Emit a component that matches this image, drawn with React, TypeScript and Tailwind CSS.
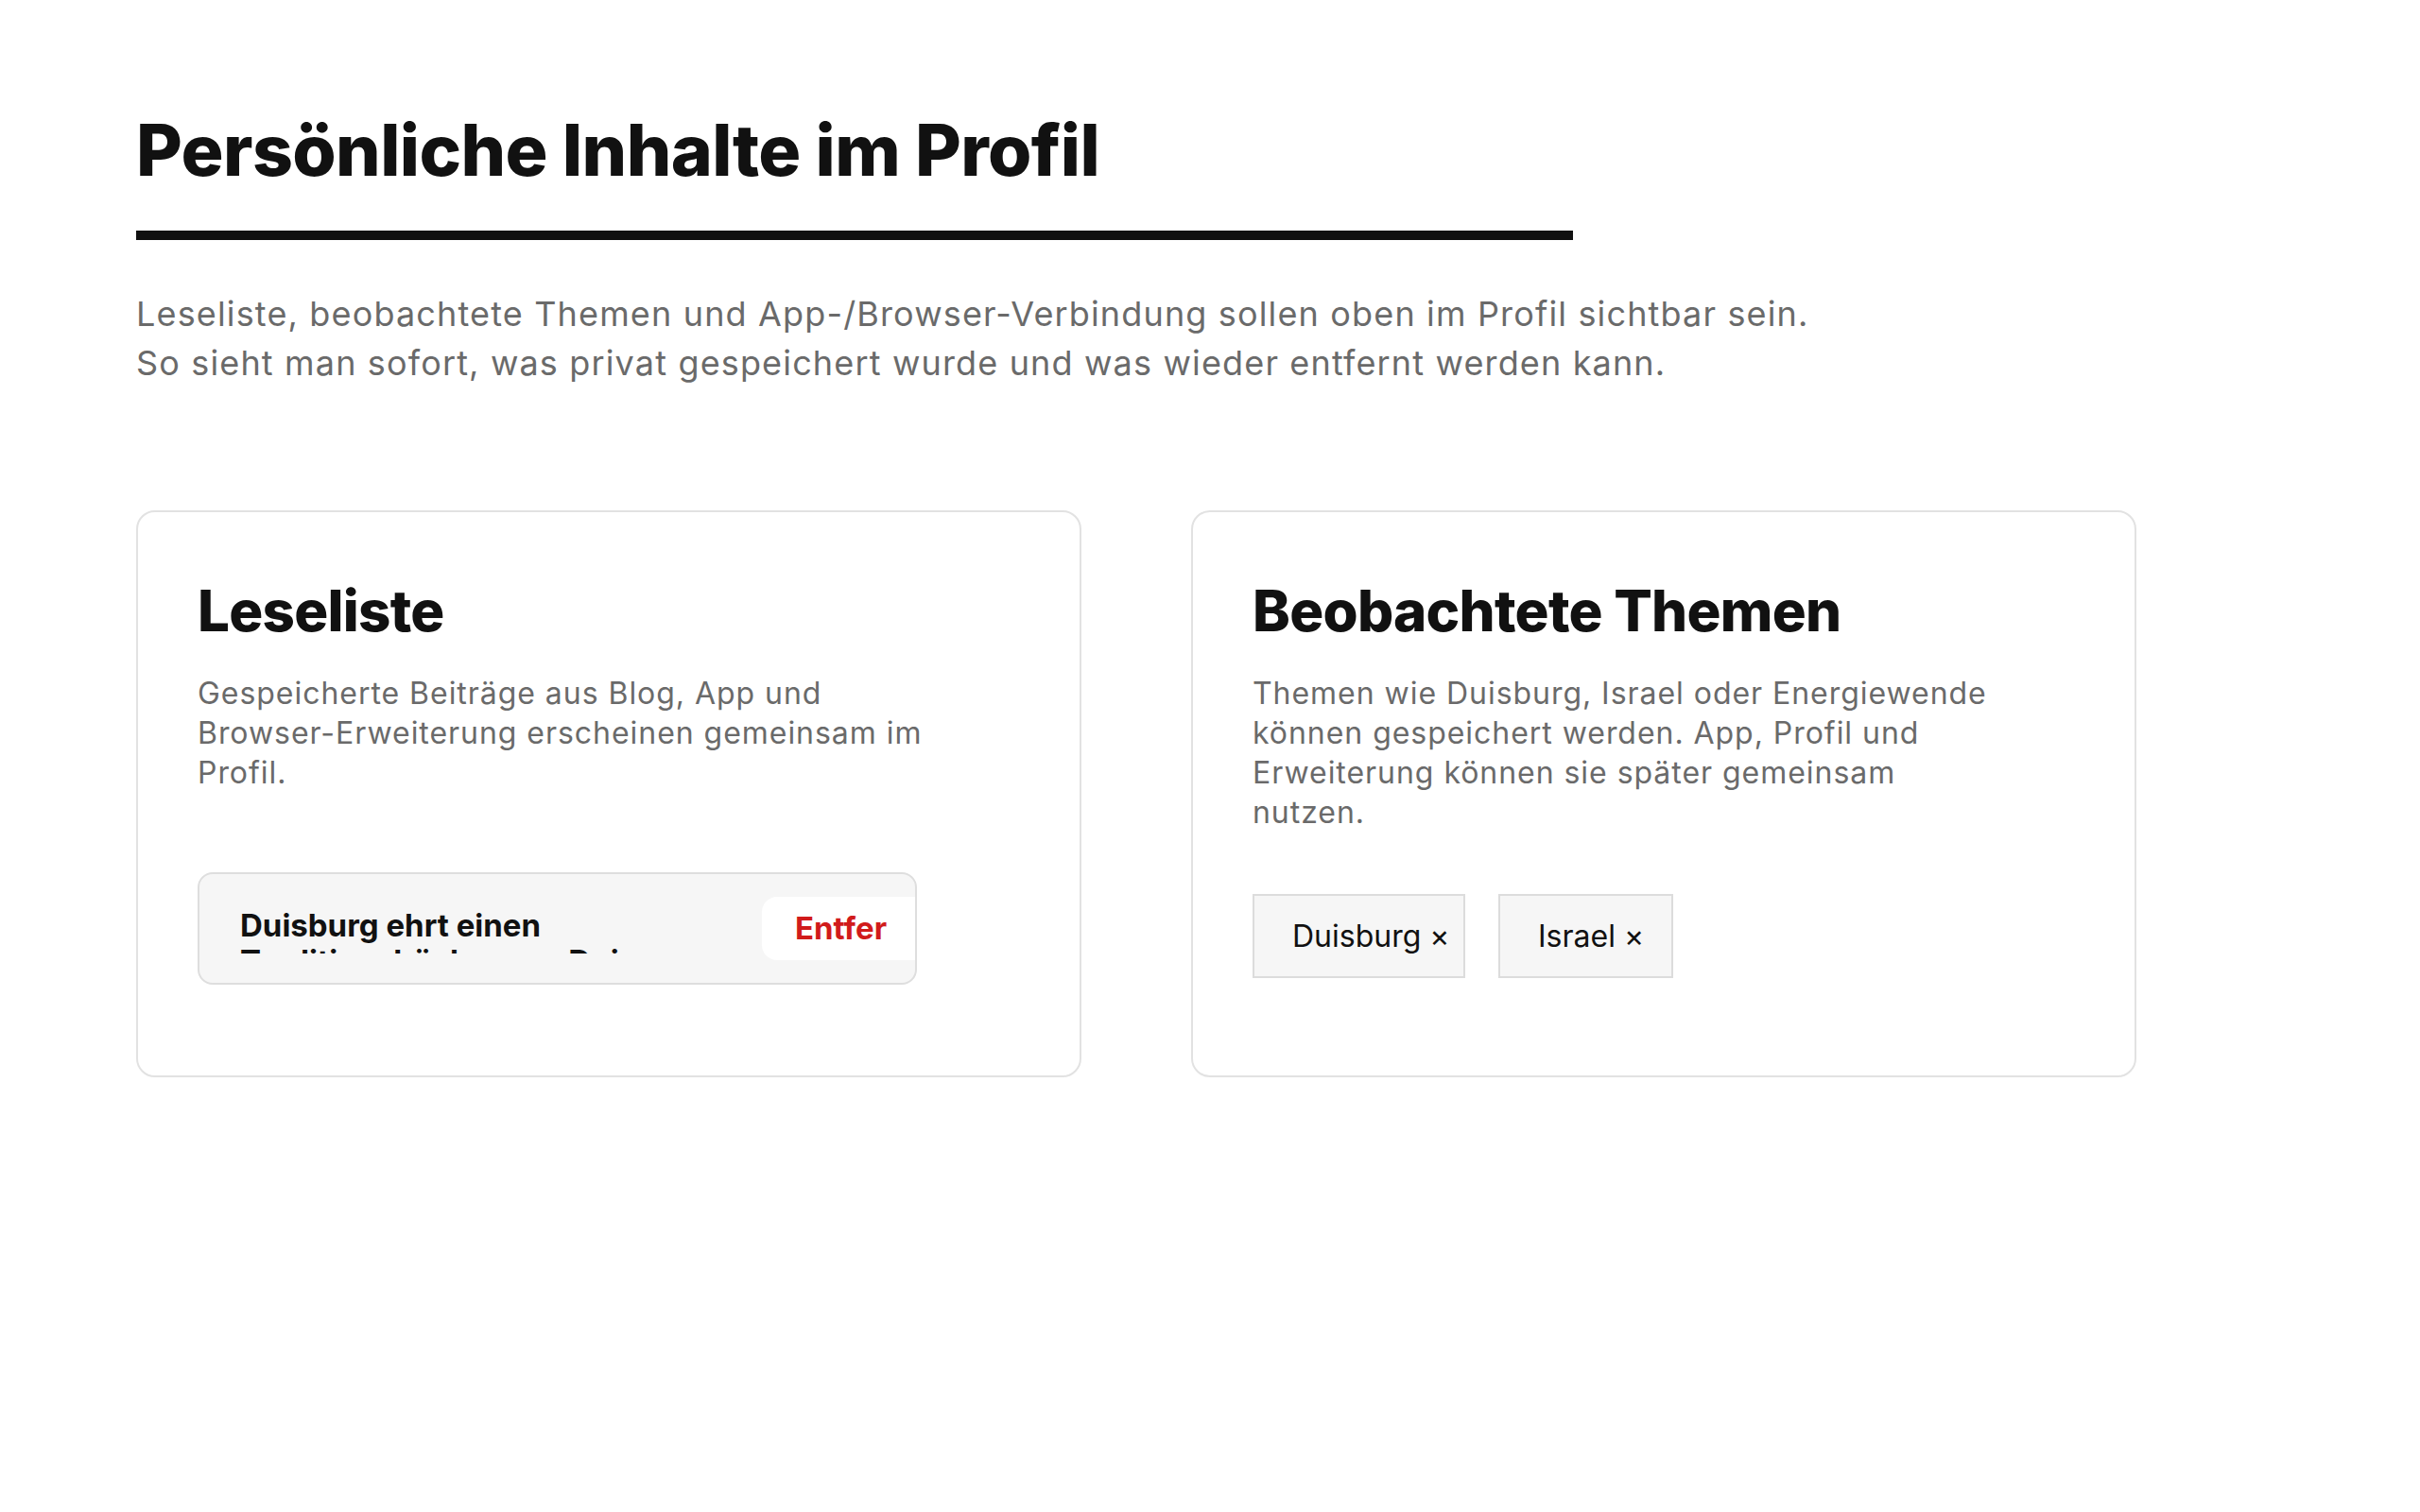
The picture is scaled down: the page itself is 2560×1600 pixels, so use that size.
import React from "react";

const font = { fontFamily: "Inter, 'Noto Sans', sans-serif" };

function Card({ children }: { children: React.ReactNode }) {
  return (
    <div className="rounded-[20px] border-2 border-[#e2e2e2] bg-white pl-[63px] pr-[63px] pt-[68px] pb-[96px]">
      {children}
    </div>
  );
}

export default function App() {
  return (
    <div className="min-h-screen bg-white text-[#111111]" style={font}>
      <div className="pl-[144px] pt-[121px]">
        <h1 className="text-[75px] font-extrabold leading-none tracking-[-0.008em]">Persönliche Inhalte im Profil</h1>
        <div className="mt-[48px] h-[10px] w-[1520px] bg-[#111111]" />
        <p className="mt-[52px] text-[36px] leading-[52px] text-[#6a6a6a] tracking-[0.032em]">
          Leseliste, beobachtete Themen und App-/Browser-Verbindung sollen oben im Profil sichtbar sein.
          <br />
          So sieht man sofort, was privat gespeichert wurde und was wieder entfernt werden kann.
        </p>

        <div className="mt-[130px] grid grid-cols-[1000px_1000px] gap-[116px]">
          <Card>
            <h2 className="text-[60px] font-extrabold leading-[72px] tracking-[-0.012em]">Leseliste</h2>
            <p className="mt-[31px] max-w-[820px] text-[32px] leading-[42px] text-[#6a6a6a] tracking-[0.03em]">
              Gespeicherte Beiträge aus Blog, App und
              <br />
              Browser-Erweiterung erscheinen gemeinsam im
              <br />
              Profil.
            </p>
            <div className="mt-[84px] flex h-[119px] w-[761px] items-start gap-[24px] overflow-hidden rounded-[16px] border-2 border-[#dedede] bg-[#f6f6f6] py-[24px] pl-[43px]">
              <div className="mt-[11px] h-[49px] w-[528px] shrink-0 overflow-hidden text-[33px] font-bold leading-[38px]">
                Duisburg ehrt einen Traditionsbäcker aus Duissern
              </div>
              <button className="h-[67px] w-[176px] shrink-0 overflow-hidden break-all rounded-[16px] bg-white px-[35px] text-left text-[33px] font-bold leading-[67px] text-[#d11b1b]">
                Entfernen
              </button>
            </div>
          </Card>

          <Card>
            <h2 className="text-[60px] font-extrabold leading-[72px] tracking-[-0.012em]">Beobachtete Themen</h2>
            <p className="mt-[31px] max-w-[820px] text-[32px] leading-[42px] text-[#6a6a6a] tracking-[0.03em]">
              Themen wie Duisburg, Israel oder Energiewende
              <br />
              können gespeichert werden. App, Profil und
              <br />
              Erweiterung können sie später gemeinsam
              <br />
              nutzen.
            </p>
            <div className="mt-[65px] flex gap-[35px]">
              <button className="flex h-[89px] w-[225px] items-center border-2 border-[#dcdcdc] bg-[#f6f6f6] pl-[40px] text-[32px] text-[#111111]">
                Duisburg ×
              </button>
              <button className="flex h-[89px] w-[185px] items-center border-2 border-[#dcdcdc] bg-[#f6f6f6] pl-[40px] text-[32px] text-[#111111]">
                Israel ×
              </button>
            </div>
          </Card>
        </div>
      </div>
    </div>
  );
}
